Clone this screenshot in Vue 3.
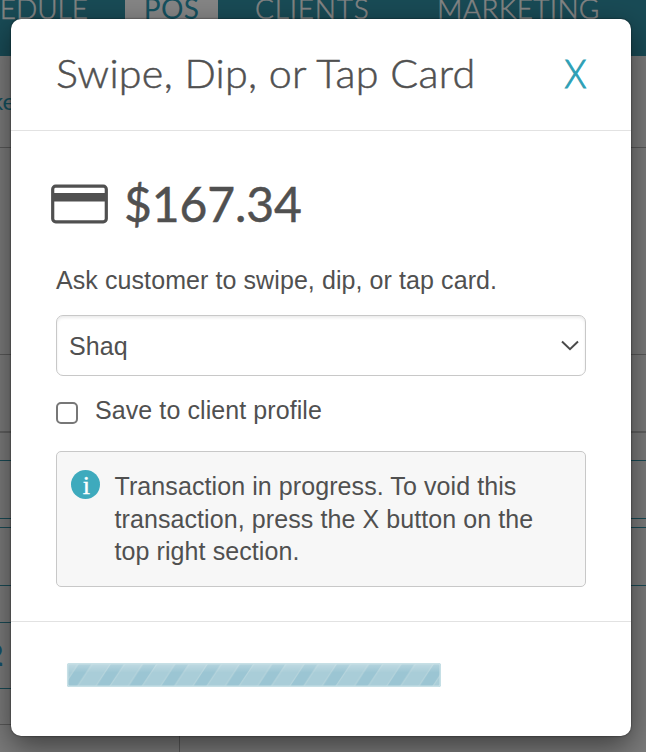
<script setup>
import { ref } from 'vue'

const tabs = [
  { label: 'SCHEDULE', key: 'schedule' },
  { label: 'POS', key: 'pos' },
  { label: 'CLIENTS', key: 'clients' },
  { label: 'MARKETING', key: 'marketing' },
]
const rows = ['toolbar', 'summary', 'details', 'gap', 'field', 'split', 'client', 'total']
const client = ref('Shaq')
const save = ref(false)
</script>

<template>
  <div class="screen">
    <div class="page">
      <nav class="nav">
        <span v-for="t in tabs" :key="t.key" class="tab" :class="t.key"><span>{{ t.label }}</span></span>
      </nav>
      <div class="crumb"><span>ke</span></div>
      <div v-for="r in rows" :key="r" class="row" :class="r"><span v-if="r === 'total'">2</span></div>
      <div class="bottom"></div>
    </div>

    <section class="modal" role="dialog">
      <header class="head">
        <h1>Swipe, Dip, or Tap Card</h1>
        <button class="close">X</button>
      </header>
      <main class="body">
        <div class="amount">
          <svg width="57" height="40" viewBox="0 0 57 40">
            <rect x="1.7" y="2.2" width="53.6" height="35.600" rx="3" fill="none" stroke="#505050" stroke-width="3.2" />
            <rect x="2" y="9" width="53" height="8.5" fill="#505050" />
          </svg>
          <span>$167.34</span>
        </div>
        <p class="ask">Ask customer to swipe, dip, or tap card.</p>
        <div class="select">
          <span>{{ client }}</span>
          <svg width="18" height="12" viewBox="0 0 18 12">
            <path d="M1 1.5 9 9.2 17 1.5" fill="none" stroke="#4a4a4a" stroke-width="2" />
          </svg>
        </div>
        <label class="save">
          <input v-model="save" type="checkbox" />
          <span>Save to client profile</span>
        </label>
        <div class="notice">
          <span class="info">i</span>
          <p>Transaction in progress. To void this<br />transaction, press the X button on the<br />top right section.</p>
        </div>
      </main>
      <footer class="foot">
        <svg class="bar" width="375" height="24" viewBox="0 0 375 24">
          <defs>
            <pattern id="stripe" width="32.3" height="24" patternUnits="userSpaceOnUse" x="-3">
              <rect width="32.3" height="24" fill="#9bc5d3" />
              <path d="M14 24 30 0H48L32.300 24ZM-18.300 24-2.300 0H15.700L0 24Z" fill="#a9cdd8" />
              <path d="M14 24 30 0M-18.300 24-2.300 0M32.300 24 48 0M0 24 15.700 0" stroke="#b5d4dc" stroke-width="1.200" />
            </pattern>
            <linearGradient id="shine" x2="0" y2="1">
              <stop offset="0" stop-color="#fff" stop-opacity=".28" />
              <stop offset=".4" stop-color="#fff" stop-opacity="0" />
            </linearGradient>
          </defs>
          <rect x="1" width="374" height="24" rx="2.500" fill="url(#stripe)" />
          <rect x="1" width="374" height="24" rx="2.500" fill="url(#shine)" />
          <rect x="1.700" y=".75" width="372.500" height="22.500" rx="2" fill="none" stroke="#c7e0e6" stroke-width="1.500" />
        </svg>
      </footer>
    </section>
  </div>
</template>

<style>
body {
  margin: 0;
  overflow: hidden;
}
</style>

<style scoped>
* {
  box-sizing: border-box;
}
.screen {
  position: relative;
  width: 646px;
  height: 752px;
  overflow: hidden;
  font-family: "Liberation Sans", Arial, sans-serif;
  color: #505050;
}
.page {
  height: 752px;
  background: #7b7b7b;
  font-family: Lato, sans-serif;
}
.nav {
  height: 56px;
  display: grid;
  grid-template-columns: 125px 93px 190px 238px;
  background: #194b56;
  color: #858585;
  font-size: 28px;
  line-height: 34px;
  font-weight: 300;
  -webkit-text-stroke: 0.5px;
}
.tab {
  display: flex;
  justify-content: center;
  white-space: nowrap;
}
.tab span {
  margin-top: -9px;
}
.schedule {
  justify-content: flex-end;
  padding-right: 37px;
}
.pos {
  background: #858585;
  color: #15515f;
  font-weight: 400;
  letter-spacing: 0.4px;
  -webkit-text-stroke: 0;
}
.marketing {
  justify-content: flex-start;
  padding-left: 29px;
  letter-spacing: 0.3px;
}
.clients {
  justify-content: flex-start;
  padding-left: 37px;
  letter-spacing: 0.8px;
}
.crumb {
  height: 92px;
  display: flex;
  padding: 31px 0 0;
  border-bottom: 1px solid #595959;
  color: #15515f;
  font-size: 24px;
  line-height: 28px;
}
.crumb span {
  margin-left: -9px;
}
.row {
  border-bottom: 1px solid #194b56;
}
.toolbar {
  height: 207px;
  border-color: #595959;
}
.summary {
  height: 78px;
  border-bottom: 2px solid #606060;
}
.details {
  height: 28px;
}
.gap {
  height: 58px;
}
.field {
  height: 9px;
}
.split {
  height: 58px;
}
.client {
  height: 37px;
  width: 180px;
}
.total {
  display: flex;
  height: 66px;
  width: 180px;
  color: #15516b;
  font-size: 30px;
  line-height: 36px;
  padding-top: 13px;
}
.total span {
  margin-left: -14px;
  font-weight: 700;
}
.bottom {
  width: 180px;
  height: 63px;
  border-right: 1px solid #595959;
}
.bottom::before {
  content: "";
  display: block;
  height: 35px;
  border-bottom: 1px solid #595959;
}
.modal {
  position: absolute;
  left: 11px;
  top: 19px;
  width: 620px;
  height: 717px;
  display: flex;
  flex-direction: column;
  background: #fff;
  border-radius: 10px;
  box-shadow: 0 10px 30px rgba(0, 0, 0, 0.5), 0 0 2px rgba(0, 0, 0, 0.7);
}
.head {
  height: 112px;
  display: flex;
  justify-content: space-between;
  padding: 30px 45px 0;
  border-bottom: 1px solid #e2e2e2;
  font-family: Lato, sans-serif;
}
h1 {
  margin: 0;
  font-size: 39px;
  line-height: 48px;
  font-weight: 300;
  letter-spacing: 0.25px;
  white-space: nowrap;
  transform: scaleX(1.058);
  transform-origin: left;
  -webkit-text-stroke: 0.5px;
}
.close {
  height: 48px;
  padding: 0;
  border: 0;
  background: none;
  color: #2d9fb5;
  font: 300 39px/48px Lato, sans-serif;
  transform: scaleX(0.9);
  transform-origin: right;
  -webkit-text-stroke: 1px;
}
.body {
  height: 491px;
  padding: 47px 45px 0;
  border-bottom: 1px solid #e2e2e2;
  font-size: 25px;
  letter-spacing: 0.085px;
}
.amount {
  display: flex;
  height: 58px;
  margin-left: -5px;
  gap: 16px;
}
.amount svg {
  margin-top: 6px;
}
.amount span {
  font: 400 48px/52px Lato, sans-serif;
  white-space: nowrap;
  letter-spacing: -0.1px;
  -webkit-text-stroke: 0.5px;
}
.ask {
  margin: 29px 0 0;
  line-height: 30px;
  white-space: nowrap;
}
.select {
  display: flex;
  align-items: center;
  justify-content: space-between;
  height: 61px;
  margin-top: 20px;
  padding: 0 6px 0 12px;
  border: 1px solid #c8c8c8;
  border-radius: 7px;
  box-shadow: inset 0 2px 3px rgba(0, 0, 0, 0.08);
}
.select span {
  padding-top: 2px;
}
.save {
  display: flex;
  height: 30px;
  margin-top: 19px;
  gap: 17px;
  line-height: 30px;
  white-space: nowrap;
}
input {
  appearance: none;
  width: 22px;
  height: 22px;
  margin: 7px 0 0;
  border: 2px solid #777;
  border-radius: 5px;
}
.notice {
  display: flex;
  height: 136px;
  margin-top: 26px;
  padding: 18px 14px;
  gap: 14.5px;
  border: 1px solid #c8c8c8;
  border-radius: 5px;
  background: #f7f7f7;
}
.info {
  width: 29px;
  height: 29px;
  flex: none;
  border-radius: 50%;
  background: #3eaabd;
  color: #fff;
  font: 400 26px/31px "Liberation Serif", serif;
  text-align: center;
  -webkit-text-stroke: 0.4px;
  padding-left: 2px;
}
.notice p {
  margin: 0;
  line-height: 32.5px;
  white-space: nowrap;
}
.foot {
  padding: 41px 0 0 55px;
}
.bar {
  display: block;
}
</style>
